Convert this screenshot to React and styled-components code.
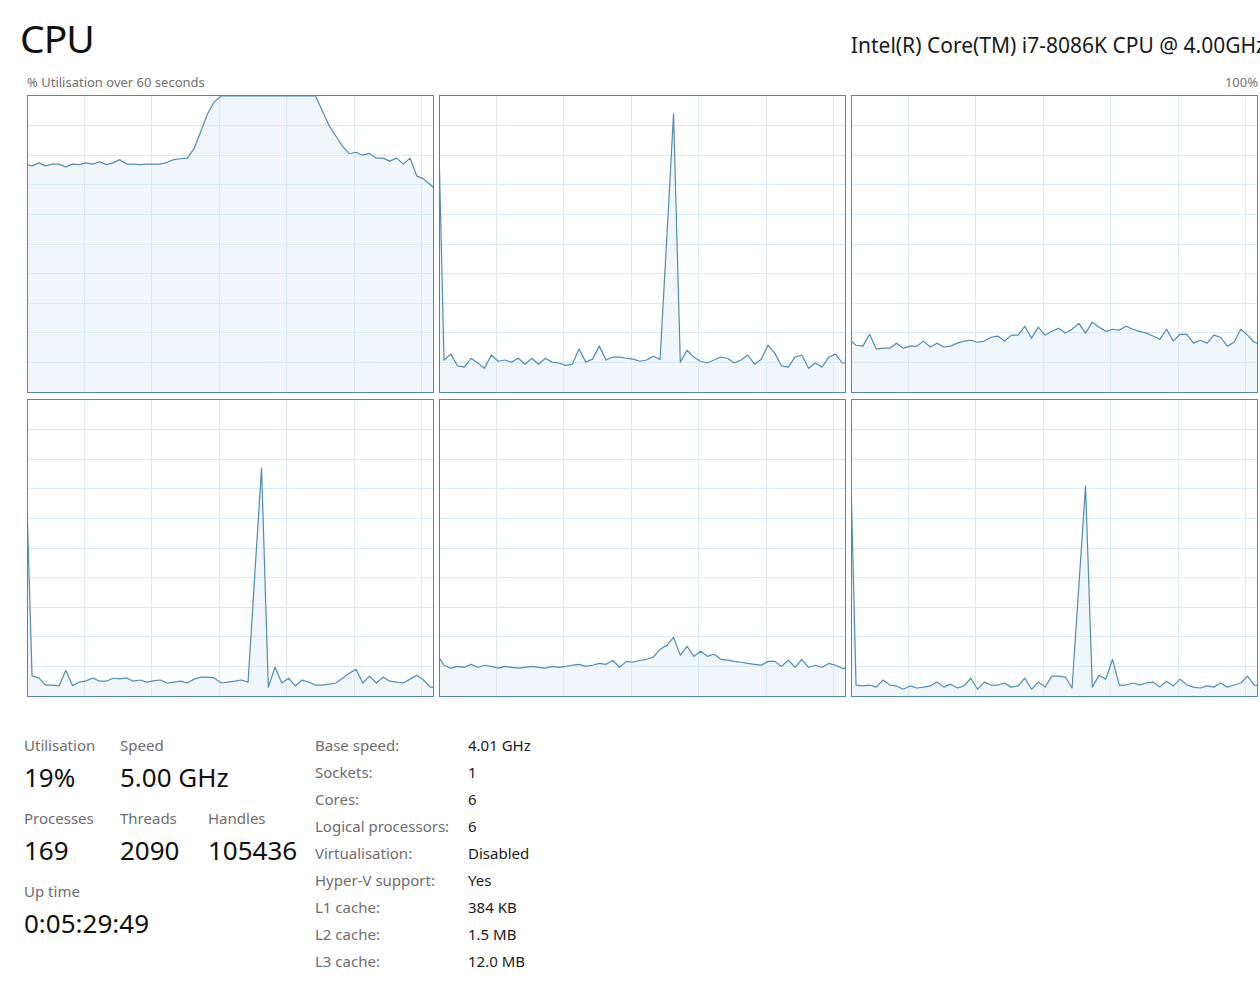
import React from 'react';
import styled, { createGlobalStyle } from 'styled-components';

// utilisation samples per logical processor, one per second (0-100)
const fill = (n, v) => Array(n).fill(v);

const cores = [
    [77, 76.4, 77.4, 76.4, 77, 77, 76, 77, 76.8, 77.4, 77, 77.8, 76.8, 77.4, 78.5, 77, 77, 76.8, 77, 77, 77,
        77.6, 78.5, 78.8, 79, 82.2, 88, 94, 98, ...fill(15, 100), 95, 90, 86.5, 83, 80.5, 81, 80, 80.6, 79, 79, 78,
        79, 77, 79, 73, 72, 70, 68],
    [106, 10.8, 12.8, 8.8, 8.4, 11.4, 9.8, 8, 12.5, 10.4, 10.8, 10.1, 11.4, 9.4, 11.4, 9.4, 11.4, 10.1, 9.8, 9,
        9.4, 14.5, 10.1, 11.1, 15.5, 10.8, 11.8, 11.8, 11.4, 11.1, 10.4, 10.8, 12.1, 11, 52, 94, 10.1, 14.1, 11.8,
        10.4, 9.8, 10.8, 11.8, 11.4, 9.8, 10.8, 12.5, 9.4, 11.1, 15.8, 13.1, 8.8, 8.4, 11.8, 12.5, 8, 9.8, 8.4,
        11.8, 12.8, 9.8, 10],
    [17.8, 15.8, 15.5, 19.5, 14.5, 14.8, 14.8, 16.5, 14.8, 15.5, 15.5, 17.2, 15.2, 16.5, 15.2, 15.5, 16.5, 17.2,
        17.5, 16.8, 17.2, 18.5, 18.9, 17.2, 19.2, 19.2, 22.2, 18.2, 21.9, 19.2, 20.5, 21.5, 19.9, 21.2, 23.2, 19.9,
        23.6, 21.9, 20.5, 21.2, 20.9, 22.2, 21.2, 20.5, 19.9, 18.9, 17.8, 21.2, 17.2, 19.5, 19.5, 16.5, 17.5, 16.5,
        19.2, 18.5, 15.5, 16.8, 21.2, 19.2, 16.8, 16],
    [83.8, 6.8, 6.1, 3.7, 3.7, 3.4, 8.7, 3.5, 4.7, 5.1, 6.1, 5, 5, 6, 5.8, 6.1, 5, 5.4, 4.7, 5.1, 5.4, 4.4, 4.7,
        5, 4.4, 5.7, 6.4, 6.4, 6.1, 4.4, 4.7, 5, 5.4, 4.7, 41, 77, 3, 9.7, 4.4, 6, 3.4, 5.4, 4.7, 3.7, 3.7, 4, 4.4,
        6, 7.7, 9, 4.4, 6.7, 4.4, 6.4, 5, 4.7, 4.4, 5.7, 7, 5.4, 3, 3],
    [14, 10.4, 9.4, 10, 9.7, 10.7, 9.7, 10.4, 10, 9.4, 10, 9.7, 9.4, 9.7, 10, 9.7, 9.4, 10, 9.7, 10, 10.4, 10.7,
        10, 10.4, 11, 10.7, 12, 9.7, 11.7, 11.4, 12, 12.4, 13.1, 15.8, 17.1, 19.8, 13.8, 16.8, 13.4, 15.1, 13.4,
        14.1, 12.4, 12.1, 11.7, 11.4, 11, 10.7, 10.4, 11.7, 11.7, 10, 12.1, 9.7, 12.4, 9.7, 10.4, 9.7, 11, 10.4,
        9.4, 9],
    [95.9, 3.7, 3.4, 3.7, 3, 5.4, 3.7, 3.4, 2.3, 3.4, 2.7, 3, 3.4, 4.7, 3, 4, 2.7, 3.4, 6, 2.3, 4.7, 3.7, 3.7,
        4.4, 3, 3.4, 6, 2.3, 4.7, 3, 6.7, 6.7, 6.4, 2.7, 37, 71, 3, 7, 5.7, 12.4, 3.7, 3.7, 4.4, 3.7, 4.4, 4.7, 3,
        5, 3.4, 5.7, 3.7, 3, 2.7, 3.4, 3, 4.4, 3, 3.7, 4.4, 6.7, 3.7, 3.5],
];

const stats = [
    { label: 'Utilisation', value: '19%' },
    { label: 'Speed', value: '5.00 GHz', span: 2 },
    { label: 'Processes', value: '169' },
    { label: 'Threads', value: '2090' },
    { label: 'Handles', value: '105436' },
    { label: 'Up time', value: '0:05:29:49', span: 3 },
];

const specs = [
    ['Base speed:', '4.01 GHz'],
    ['Sockets:', '1'],
    ['Cores:', '6'],
    ['Logical processors:', '6'],
    ['Virtualisation:', 'Disabled'],
    ['Hyper-V support:', 'Yes'],
    ['L1 cache:', '384 KB'],
    ['L2 cache:', '1.5 MB'],
    ['L3 cache:', '12.0 MB'],
];

const vLines = [8.3, 18.3, 28.3, 38.3, 48.3, 58.3];
const hLines = [10, 20, 30, 40, 50, 60, 70, 80, 90];

const CoreGraph = ({ data }) => {
    const pts = data.map((v, i) => `${(i - 0.4).toFixed(2)},${100 - v}`).join(' ');
    const last = (data.length - 1.4).toFixed(2);

    return (
        <Panel>
            <Chart viewBox="0 0 60 100" preserveAspectRatio="none">
                <polygon points={`-0.4,100 ${pts} ${last},100`} fill="#f1f6fa" />
                {vLines.map((x) => (
                    <line key={'v' + x} x1={x} x2={x} y1={0} y2={100} className="grid" />
                ))}
                {hLines.map((y) => (
                    <line key={'h' + y} x1={0} x2={60} y1={y} y2={y} className="grid" />
                ))}
                <polyline points={pts} className="trace" />
            </Chart>
        </Panel>
    );
};

export default function App() {
    return (
        <Page>
            <GlobalStyle />
            <Header>
                <Title>CPU</Title>
                <Model>Intel(R) Core(TM) i7-8086K CPU @ 4.00GHz</Model>
            </Header>
            <AxisRow>
                <span>% Utilisation over 60 seconds</span>
                <span>100%</span>
            </AxisRow>
            <GraphGrid>
                {cores.map((data, i) => (
                    <CoreGraph key={i} data={data} />
                ))}
            </GraphGrid>
            <Details>
                <Stats>
                    {stats.map((s) => (
                        <Stat key={s.label} $span={s.span}>
                            <StatLabel>{s.label}</StatLabel>
                            <StatValue>{s.value}</StatValue>
                        </Stat>
                    ))}
                </Stats>
                <SpecTable>
                    {specs.map(([k, v]) => (
                        <React.Fragment key={k}>
                            <SpecKey>{k}</SpecKey>
                            <SpecValue>{v}</SpecValue>
                        </React.Fragment>
                    ))}
                </SpecTable>
            </Details>
        </Page>
    );
}

const GlobalStyle = createGlobalStyle`
    html, body {
        margin: 0;
        background: #ffffff;
        overflow: hidden;
    }
    body {
        font-family: "Noto Sans", "Open Sans", "Liberation Sans", sans-serif;
        color: #1a1a1a;
    }
`;

const Page = styled.div`
    width: 1260px;
    height: 1000px;
    overflow: hidden;
    background: #ffffff;
`;

const Header = styled.header`
    display: flex;
    justify-content: space-between;
    align-items: baseline;
    padding: 12px 0 0 20px;
    margin-right: -6px;
`;

const Title = styled.h1`
    margin: 0;
    font-size: 39px;
    line-height: 52px;
    font-weight: 400;
    letter-spacing: -1px;
    color: #111111;
`;

const Model = styled.div`
    font-size: 21px;
    line-height: 28px;
    white-space: nowrap;
    color: #1a1a1a;
`;

const AxisRow = styled.div`
    display: flex;
    justify-content: space-between;
    margin-top: 9px;
    padding: 0 2px 0 27px;
    font-size: 13px;
    line-height: 18px;
    color: #707070;
`;

const GraphGrid = styled.div`
    display: grid;
    grid-template-columns: repeat(3, 407px);
    grid-auto-rows: 298px;
    column-gap: 5px;
    row-gap: 6px;
    margin: 4px 0 0 27px;
`;

const Panel = styled.div`
    box-sizing: border-box;
    border: 1px solid #4f8aa8;
    background: #ffffff;
    overflow: hidden;
`;

const Chart = styled.svg`
    display: block;
    width: 100%;
    height: 100%;

    .grid {
        stroke: #dbe9f2;
        stroke-width: 1;
        vector-effect: non-scaling-stroke;
        shape-rendering: crispEdges;
    }

    .trace {
        fill: none;
        stroke: #4f8db3;
        stroke-width: 1.2;
        stroke-linejoin: round;
        vector-effect: non-scaling-stroke;
    }
`;

const Details = styled.section`
    display: flex;
    align-items: flex-start;
    margin-top: 39px;
    padding-left: 24px;
`;

const Stats = styled.div`
    display: grid;
    grid-template-columns: 96px 88px 107px;
    row-gap: 18px;
    width: 291px;
`;

const Stat = styled.div`
    grid-column: span ${(p) => p.$span || 1};
    white-space: nowrap;
`;

const StatLabel = styled.div`
    font-size: 15px;
    line-height: 18px;
    color: #6d6d6d;
`;

const StatValue = styled.div`
    margin-top: 9px;
    font-size: 26px;
    line-height: 28px;
    color: #111111;
`;

const SpecTable = styled.div`
    display: grid;
    grid-template-columns: 153px auto;
    grid-auto-rows: 27px;
    align-items: center;
    margin-top: -5px;
    font-size: 15px;
`;

const SpecKey = styled.div`
    color: #6d6d6d;
`;

const SpecValue = styled.div`
    color: #1a1a1a;
`;
